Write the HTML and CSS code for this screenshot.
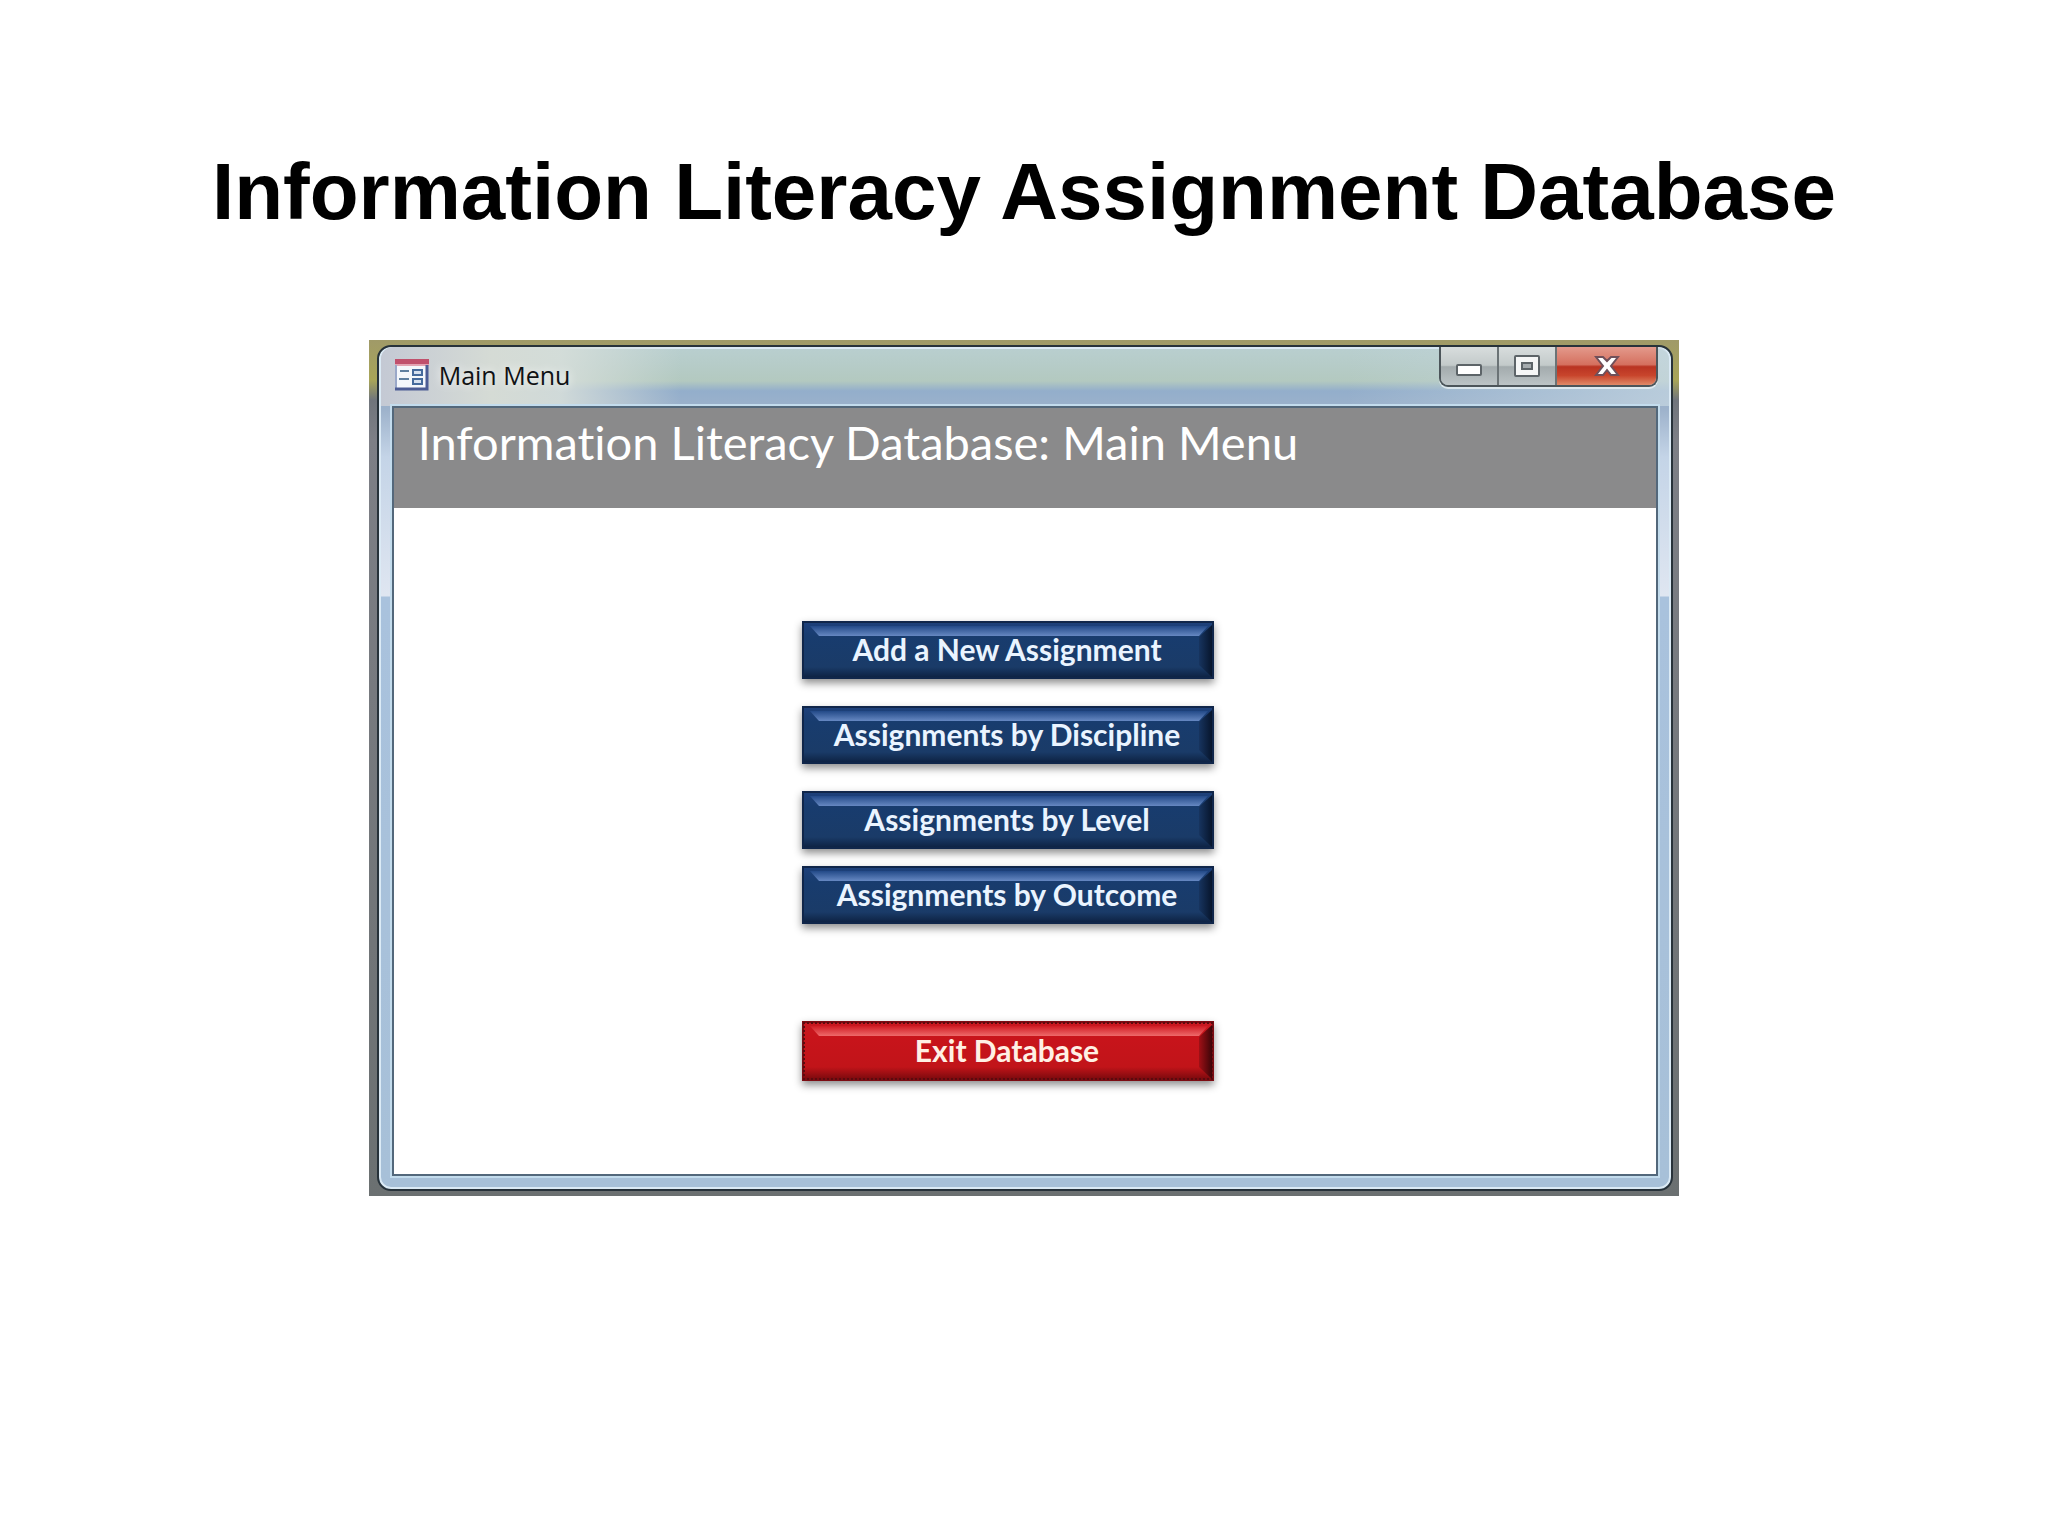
FILE: index.html
```
<!DOCTYPE html>
<html lang="en">
  <head>
    <meta charset="utf-8">
    <title>Information Literacy Assignment Database</title>
    <link rel="stylesheet" href="styles.css">
  </head>

  <body>
    <h1 class="title">Information Literacy Assignment Database</h1>

    <div class="desktop">
      <div class="window">
        <div class="titlebar">
          <svg class="formicon" width="34" height="32" viewBox="0 0 34 32">
            <rect x="1" y="1" width="32" height="30" fill="#f4f7fb"/>
            <rect x="0" y="0" width="34" height="6" fill="#c0506c"/>
            <path d="M0 6h34" stroke="#e3a3b2" stroke-width="2"/>
            <path d="M1 6v25" stroke="#9aa8c8" stroke-width="2"/>
            <path d="M0 30h32V6" fill="none" stroke="#4c5c94" stroke-width="3"/>
            <path d="M5 12h9M4 20h10" stroke="#5f7f9f" stroke-width="2"/>
            <path d="M18 11h9v5h-9zM18 20h9v5h-9z" fill="#d5e0ef" stroke="#456a9c" stroke-width="2"/>
          </svg>
          <span class="caption">Main Menu</span>
          <div class="controls">
            <button class="control min" aria-label="Minimize">
              <svg width="28" height="14" viewBox="0 0 28 14">
                <rect x="2" y="2" width="24" height="10" rx="1" fill="#fff" stroke="#5d6468" stroke-width="2"/>
              </svg>
            </button>
            <button class="control max" aria-label="Maximize">
              <svg width="28" height="22" viewBox="0 0 28 22">
                <rect x="2" y="1" width="24" height="20" rx="1" fill="#f5f6f6" stroke="#5d6468" stroke-width="2"/>
                <rect x="9" y="8" width="10" height="6" fill="#a5abae" stroke="#5d6468" stroke-width="2"/>
              </svg>
            </button>
            <button class="control close" aria-label="Close">
              <svg width="26" height="22" viewBox="0 0 26 22">
                <path d="M2 2h7l4 4 4-4h7l-7 9 7 9h-7l-4-5-4 5H2l7-9z" fill="#fff" stroke="#70505a" stroke-width="2"/>
              </svg>
            </button>
          </div>
        </div>

        <div class="client">
          <h2 class="heading">Information Literacy Database: Main Menu</h2>
          <div class="menu">
            <button class="item">Add a New Assignment</button>
            <button class="item">Assignments by Discipline</button>
            <button class="item">Assignments by Level</button>
            <button class="item tight">Assignments by Outcome</button>
            <button class="item exit">Exit Database</button>
          </div>
        </div>
      </div>
    </div>
  </body>
</html>
```
FILE: styles.css
```
* {
  box-sizing: border-box;
}

body {
  margin: 0;
  background-color: #fff;
}

.title {
  margin: 0;
  padding: 146px 20px 102px;
  font-family: "Liberation Sans", Arial, sans-serif;
  font-size: 80px;
  line-height: 92px;
  text-align: center;
  color: #000;
}

/* what shows around the window edges */
.desktop {
  width: 64%;
  margin: 0 auto;
  padding: 5px 6px 5px 8px;
  background: linear-gradient(#a09a68 0, #a8a558 40px, #70757c 60px, #7d7f86 100px, #6b7071 100%);
}

.window {
  padding: 0 13px 13px;
  border: 2px solid #27323a;
  border-radius: 14px;
  box-shadow: inset 0 0 0 2px #dbeaf5;
  background: linear-gradient(#b9cfd0 0, #b3c9c0 34px, #93aecb 44px, #9db2cb 62px, #c4d4e7 110px, #dfe6f1 249px, #a9c2dd 250px, #a7c0d8 100%);
}

.titlebar {
  display: flex;
  align-items: flex-start;
  height: 59px;
  margin: 0 -11px;
  padding: 0 11px 0 14px;
  border-radius: 12px 12px 0 0;
  background: linear-gradient(90deg, #c4c9d4 0, #d5dbd5 110px, rgba(214, 222, 218, 0.9) 180px, rgba(190, 208, 205, 0) 300px, rgba(190, 208, 205, 0) 75%, rgba(200, 216, 226, 0.7) 100%);
}

.formicon {
  margin-top: 12px;
}

.caption {
  margin-left: 10px;
  padding-top: 10px;
  font-family: "Open Sans", "Noto Sans", sans-serif;
  font-size: 25px;
  line-height: 36px;
  color: #101214;
  text-shadow: 0 0 10px #fff;
}

.controls {
  display: flex;
  margin-left: auto;
  border: 2px solid #4c555a;
  border-top: 0;
  border-radius: 0 0 9px 9px;
  box-shadow: 0 2px 0 rgba(240, 246, 250, 0.7);
  overflow: hidden;
}

.control {
  display: flex;
  justify-content: center;
  align-items: center;
  width: 58px;
  height: 38px;
  padding: 0;
  border: 0;
  border-right: 2px solid #6b7376;
  background: linear-gradient(#d8dddd 0, #c3caca 48%, #a3abad 52%, #bcc4c6 100%);
}

.min {
  padding-top: 8px;
}

.close {
  width: 99px;
  border-right: 0;
  background: linear-gradient(#e39a8c 0, #d5705f 46%, #b93322 52%, #c8452c 75%, #e08a68 100%);
}

.client {
  border: 2px solid #53687b;
  box-shadow: 0 0 0 2px #c3dced;
  background-color: #fff;
}

.heading {
  margin: 0;
  padding: 6px 24px 38px;
  background-color: #8a8a8b;
  font-family: Lato, sans-serif;
  font-size: 47px;
  font-weight: 400;
  font-variant-ligatures: none;
  line-height: 56px;
  color: #fff;
}

.menu {
  display: flex;
  flex-direction: column;
  align-items: center;
  gap: 27px;
  padding: 113px 34px 93px 0;
}

.item {
  position: relative;
  width: 412px;
  height: 58px;
  padding: 0 2px 2px 0;
  border: 2px solid #10264a;
  background: linear-gradient(#1d407a 0, #183c6e 14px, #1a3b68 44px, #0e2344 100%);
  box-shadow: 0 4px 8px rgba(0, 0, 0, 0.45);
  font-family: Lato, sans-serif;
  font-size: 30px;
  font-weight: 700;
  line-height: 36px;
  color: #eaf4ff;
}

/* lit top edge of the bevel */
.item::before {
  content: "";
  position: absolute;
  top: 3px;
  left: 6px;
  right: 4px;
  height: 10px;
  background: linear-gradient(#234a88, #6688c2);
  clip-path: polygon(0 0, 100% 0, calc(100% - 9px) 100%, 9px 100%);
}

/* shaded right edge */
.item::after {
  content: "";
  position: absolute;
  top: 2px;
  right: 0;
  bottom: 0;
  width: 13px;
  background: linear-gradient(90deg, #17345f, #07152c);
  clip-path: polygon(100% 0, 100% 100%, 0 calc(100% - 12px), 0 12px);
}

.tight {
  margin-top: -10px;
}

.exit {
  height: 60px;
  margin-top: 70px;
  border-color: #7c0c12;
  outline: 2px dotted #5a0a0e;
  outline-offset: -3px;
  background: linear-gradient(#c81820 0, #c8141b 14px, #c11419 44px, #7c0a0e 100%);
  color: #fff0e4;
}

.exit::before {
  background: linear-gradient(#d01c24, #ee6a6a);
}

.exit::after {
  background: linear-gradient(90deg, #a01016, #3c0508);
}
```
